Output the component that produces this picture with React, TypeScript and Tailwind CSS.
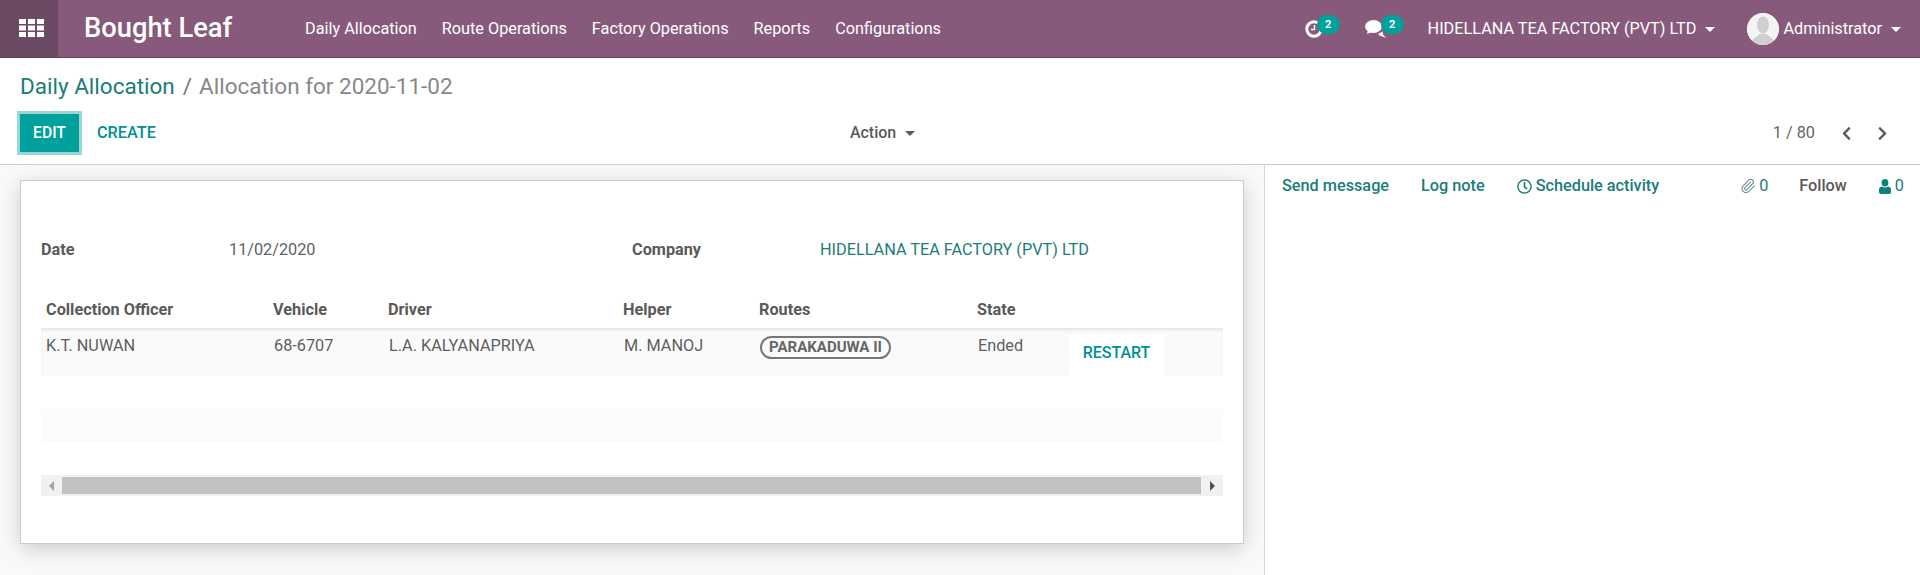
import { FaRegClock, FaChevronLeft, FaChevronRight } from 'react-icons/fa';
import { Paperclip } from 'lucide-react';

const menus = ['Daily Allocation', 'Route Operations', 'Factory Operations', 'Reports', 'Configurations'];

function Caret({ className = '' }: { className?: string }) {
  return <span className={`inline-block w-0 h-0 border-x-[5px] border-x-transparent border-t-[5px] ${className}`} />;
}

function Badge({ count, className = '' }: { count: number; className?: string }) {
  return (
    <span className={`absolute w-[23px] h-[19px] rounded-full bg-[#00a09d] text-white text-[11px] font-bold leading-[19px] text-center ${className}`}>
      {count}
    </span>
  );
}

function AppsIcon() {
  return (
    <svg viewBox="0 0 25 18" className="w-[25px] h-[18px]" fill="#ffffff">
      {[0, 6.5, 13].map((y) =>
        [0, 9, 18].map((x) => <rect key={`${x}-${y}`} x={x} y={y} width="7" height="5" />)
      )}
    </svg>
  );
}

function ClockIcon() {
  return (
    <svg viewBox="0 0 18 18" className="w-[18px] h-[18px] block" fill="none" stroke="#ffffff">
      <circle cx="9" cy="9" r="7.2" strokeWidth="3" />
      <path d="M9.5 5v4.5H6" strokeWidth="1.4" />
    </svg>
  );
}

function CommentsIcon() {
  return (
    <svg viewBox="0 0 21 18" className="w-[21px] h-[18px] block" fill="#ffffff">
      <ellipse cx="8.5" cy="6.5" rx="8.5" ry="6.5" />
      <path d="M3 10l-1 4 5-2z" />
      <path d="M13 13.6c1.8-.4 3.4-1.2 4.6-2.3l.4 3.2 3 3.2-6-2z" />
    </svg>
  );
}

function UserIcon() {
  return (
    <svg viewBox="0 0 12 15" className="w-[12px] h-[15px]" fill="#0f7f7b">
      <ellipse cx="6" cy="3.8" rx="3.4" ry="3.8" />
      <path d="M0 13V10.5C0 8.6 1.6 7.6 3 7.4c.8.6 1.9 1 3 1s2.2-.4 3-1c1.4.2 3 1.2 3 3.1V13c0 1.2-.9 2-2 2H2c-1.100 0-2-.8-2-2z" />
    </svg>
  );
}

function Navbar() {
  return (
    <header className="h-[58px] bg-[#875a7b] border-b border-[#5f4358] flex items-center text-white shrink-0">
      <div className="w-[58px] h-full bg-[#6b4a63] flex items-center justify-center pl-[5px] pb-[1px]">
        <AppsIcon />
      </div>
      <div className="ml-[26px] w-[221px] text-[27.3px] font-medium">Bought Leaf</div>
      <nav className="flex gap-[25px] text-[16.25px] pt-[1px]">
        {menus.map((m) => (
          <span key={m}>{m}</span>
        ))}
      </nav>
      <div className="ml-auto flex items-center text-[16.25px] pt-[1px]">
        <span className="relative mr-[42px]">
          <ClockIcon />
          <Badge count={2} className="left-[12px] top-[-5px]" />
        </span>
        <span className="relative mr-[42px]">
          <CommentsIcon />
          <Badge count={2} className="left-[16px] top-[-5px]" />
        </span>
        <span>HIDELLANA TEA FACTORY (PVT) LTD</span>
        <Caret className="ml-[9px] border-t-white" />
        <span className="ml-[32px] w-[32px] h-[32px] rounded-full bg-white overflow-hidden flex items-center justify-center">
          <svg viewBox="0 0 32 32" className="w-[32px] h-[32px]">
            <circle cx="16" cy="16" r="16" fill="#f4f4f4" />
            <ellipse cx="16" cy="12" rx="6" ry="8.500" fill="#cfcfcf" />
            <path d="M4 32c0-7 6-8 9-11h6c3 3 9 4 9 11z" fill="#cfcfcf" />
          </svg>
        </span>
        <span className="ml-[4px]">Administrator</span>
        <Caret className="ml-[9px] mr-[19px] border-t-white" />
      </div>
    </header>
  );
}

function ControlPanel() {
  return (
    <section className="h-[107px] bg-white border-b border-[#cccccc] px-[20px] shrink-0">
      <div className="pt-[11px] h-[56px] text-[22.5px] leading-[34px]">
        <span className="text-[#1c7d78]">Daily Allocation</span>
        <span className="text-[#777777] ml-[8px]">/</span>
        <span className="text-[#888888] ml-[7px]">Allocation for 2020-11-02</span>
      </div>
      <div className="flex items-center text-[16px]">
        <button className="w-[59px] h-[38px] bg-[#00a09d] text-white font-medium outline-[3px] outline-[#9bd6d4] text-[15.7px]">EDIT</button>
        <button className="ml-[18px] text-[#00918e] font-medium text-[16.25px]">CREATE</button>
        <div className="ml-[694px] text-[#5a5a5a] font-medium flex items-center">
          Action
          <Caret className="ml-[9px] border-t-[#5a5a5a]" />
        </div>
        <div className="ml-auto mr-[10px] flex items-center text-[#666666] text-[16.25px]">
          <span>1 / 80</span>
          <FaChevronLeft className="ml-[24px] text-[15px] text-[#5c5c5c]" />
          <FaChevronRight className="ml-[21px] text-[15px] text-[#5c5c5c]" />
        </div>
      </div>
    </section>
  );
}

const cols = ['w-[227px]', 'w-[115px]', 'w-[235px]', 'w-[136px]', 'w-[218px]', 'w-[92px]', 'w-[159px]'];

function LinesTable() {
  return (
    <table className="w-[1182px] table-fixed border-collapse text-[16.25px]">
      <colgroup>
        {cols.map((c, i) => (
          <col key={i} className={c} />
        ))}
      </colgroup>
      <thead>
        <tr className="h-[32px] font-bold text-[#5a5a5a]">
          {['Collection Officer', 'Vehicle', 'Driver', 'Helper', 'Routes', 'State', ''].map((h, i) => (
            <th key={i} className="text-left font-bold pl-[5px] align-middle pb-[4px]">{h}</th>
          ))}
        </tr>
      </thead>
      <tbody>
        <tr className="h-[48px] bg-[#fafafa] text-[#5f5f5f] shadow-[inset_0_3px_3px_-1px_#e4e4e4]">
          <td className="pl-[5px] align-top pt-[6px]">K.T. NUWAN</td>
          <td className="pl-[6px] align-top pt-[6px]">68-6707</td>
          <td className="pl-[6px] align-top pt-[6px]">L.A. KALYANAPRIYA</td>
          <td className="pl-[6px] align-top pt-[6px]">M. MANOJ</td>
          <td className="pl-[6px] align-top pt-[7px]">
            <span className="inline-flex w-[131px] h-[23px] items-center justify-center rounded-full border-2 border-[#777777] font-bold text-[15px] text-[#666666]">
              PARAKADUWA II
            </span>
          </td>
          <td className="pl-[6px] align-top pt-[6px]">Ended</td>
          <td className="align-top pt-[6px] pl-[5px]">
            <span className="block w-[95px] h-[42px] bg-white text-center text-[#00918e] font-medium text-[16px] leading-[38px]">RESTART</span>
          </td>
        </tr>
        <tr className="h-[33px]"><td colSpan={7} /></tr>
        <tr className="h-[33px] bg-[#fbfbfb]"><td colSpan={7} /></tr>
        <tr className="h-[33px]"><td colSpan={7} /></tr>
      </tbody>
    </table>
  );
}

function HScrollbar() {
  return (
    <div className="w-[1182px] h-[21px] bg-[#f1f1f1] flex items-center">
      <span className="w-[21px] flex justify-center">
        <span className="w-0 h-0 border-y-[5px] border-y-transparent border-r-[5px] border-r-[#a3a3a3]" />
      </span>
      <span className="flex-1 h-[17px] bg-[#c1c1c1]" />
      <span className="w-[22px] flex justify-center">
        <span className="w-0 h-0 border-y-[5px] border-y-transparent border-l-[5px] border-l-[#505050]" />
      </span>
    </div>
  );
}

function Sheet() {
  return (
    <div className="w-[1265px] shrink-0 bg-[#f9f9f9] border-r border-[#d9d9d9] pl-[20px] pt-[15px]">
      <div className="w-[1224px] h-[364px] bg-white border border-[#cccccc] shadow-[0_5px_20px_-1px_rgba(0,0,0,0.2)] pl-[20px] text-[16.25px]">
        <div className="flex items-center h-[32px] mt-[53px] mb-[30px]">
          <span className="w-[188px] font-bold text-[#5a5a5a]">Date</span>
          <span className="w-[403px] text-[#5f5f5f]">11/02/2020</span>
          <span className="w-[188px] font-bold text-[#5a5a5a]">Company</span>
          <span className="text-[#1c7d78]">HIDELLANA TEA FACTORY (PVT) LTD</span>
        </div>
        <LinesTable />
        <HScrollbar />
      </div>
    </div>
  );
}

function Chatter() {
  return (
    <aside className="flex-1 bg-white text-[16.25px] text-[#1c7d78] font-medium">
      <div className="h-[40px] mt-[1px] pl-[17px] pr-[16px] flex items-center">
        <span>Send message</span>
        <span className="ml-[32px]">Log note</span>
        <span className="ml-[32px] flex items-center">
          <FaRegClock className="text-[15px] mr-[4px]" />
          Schedule activity
        </span>
        <span className="ml-auto flex items-center font-normal">
          <Paperclip size={16} strokeWidth={1.6} className="text-[#5f8f8d] mr-[3px]" />0
        </span>
        <span className="ml-[31px] text-[#5a5a5a]">Follow</span>
        <span className="ml-[32px] flex items-center font-normal">
          <UserIcon />
          <span className="ml-[4px]">0</span>
        </span>
      </div>
    </aside>
  );
}

export default function App() {
  return (
    <div className="h-[575px] w-[1920px] flex flex-col overflow-hidden bg-white font-['Roboto',sans-serif]">
      <Navbar />
      <ControlPanel />
      <main className="flex flex-1 min-h-0">
        <Sheet />
        <Chatter />
      </main>
    </div>
  );
}
